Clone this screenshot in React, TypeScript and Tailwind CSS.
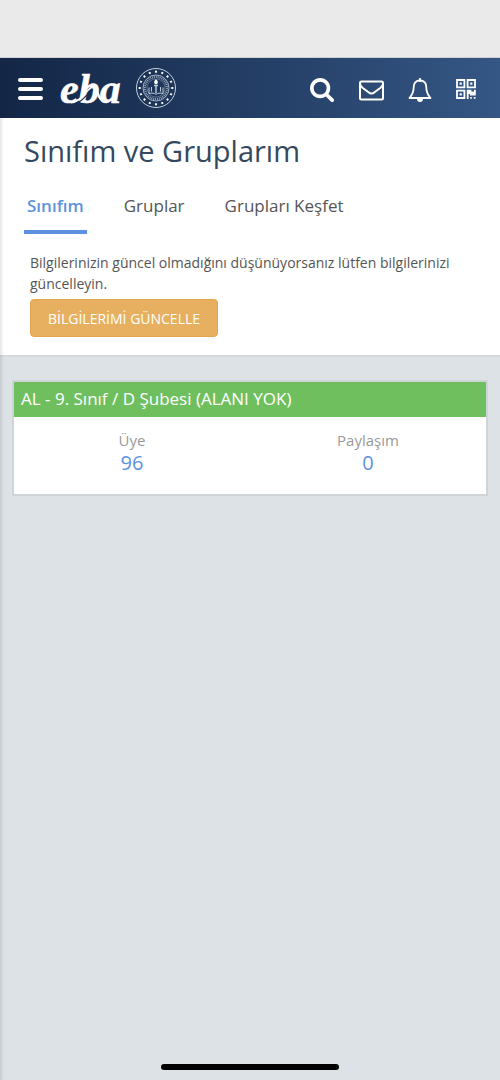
import { useState } from "react";

const TABS = ["Sınıfım", "Gruplar", "Grupları Keşfet"];

const STATS = [
  { label: "Üye", value: 96 },
  { label: "Paylaşım", value: 0 },
];

const DOTS = Array.from({ length: 16 }, (_, i) => i * 22.5);

function EbaLogo() {
  return (
    <svg
      className="overflow-visible"
      width="64"
      height="52"
      viewBox="0 0 64 52"
      role="img"
      aria-label="eba"
    >
      <text
        x="1"
        y="41"
        fill="#fff"
        stroke="#fff"
        strokeWidth="0.5"
        fontSize="42"
        fontWeight="700"
        fontStyle="italic"
        fontFamily="'Liberation Serif', serif"
      >
        eba
      </text>
      {/* swash running from the e up through the b */}
      <path d="M17 41.500C25 39 28 31 34 27.500" fill="none" stroke="#1b3054" strokeWidth="1.200" />
      <path d="M12 40.500C22 40 26 29 33 25" fill="none" stroke="#fff" strokeWidth="1.800" />
      <path d="M36 25C40 29 38 38 46 40" fill="none" stroke="#fff" strokeWidth="2.200" />
    </svg>
  );
}

function Seal() {
  return (
    <svg width="42" height="42" viewBox="0 0 42 42" fill="none" stroke="#c3cedd" aria-hidden>
      <circle cx="21" cy="21" r="19.5" strokeWidth="1" />
      <circle cx="21" cy="21" r="13" strokeWidth="0.8" />
      <circle cx="21" cy="21" r="11" strokeWidth="2.2" strokeDasharray="1 0.9" opacity="0.7" />
      <circle cx="21" cy="21" r="9" strokeWidth="0.5" opacity="0.7" />
      {DOTS.map((deg) => (
        <rect
          key={deg}
          x="20"
          y="3.7"
          width="2"
          height="2"
          fill="#fff"
          stroke="none"
          transform={`rotate(${deg} 21 21)`}
        />
      ))}
      {/* torch over an open book */}
      <path d="M21 12c-2.500 2.500-2.500 4.500 0 5.500 2.500-1 2.500-3 0-5.500z" fill="#fff" stroke="none" />
      <path d="M19 18.500h4M21 18v8" strokeWidth="1.400" />
      <path
        d="M14 20.500v6c3-.8 5.500-.3 7 .8 1.500-1.100 4-1.600 7-.8v-6M16.500 20v4.500M25.500 20v4.500"
        strokeWidth="1"
      />
    </svg>
  );
}

function SearchIcon() {
  return (
    <svg width="24" height="24" viewBox="64 128 1664 1664" fill="#fff" aria-hidden>
      <path d="M1216 832q0-185-131.5-316.5t-316.5-131.5-316.5 131.5-131.5 316.5 131.5 316.5 316.5 131.5 316.5-131.5 131.5-316.5zm512 832q0 52-38 90t-90 38q-54 0-90-38l-343-342q-179 124-399 124-143 0-273.5-55.5t-225-150-150-225-55.5-273.5 55.5-273.5 150-225 225-150 273.5-55.5 273.5 55.5 225 150 150 225 55.5 273.5q0 220-124 399l343 343q37 37 37 90z" />
    </svg>
  );
}

function MailIcon() {
  return (
    <svg width="26" height="26" viewBox="0 0 26 26" fill="none" stroke="#fff" strokeWidth="2" aria-hidden>
      <rect x="2" y="4.500" width="23" height="18" rx="1.5" />
      <path d="M2 6.500c0 1.500 1 3 2.500 4.200l6 4.500q3 2.500 6 0l6-4.500C24 9.500 25 8 25 6.500" />
    </svg>
  );
}

function BellIcon() {
  return (
    <svg width="24" height="26" viewBox="0 0 24 26" fill="none" stroke="#fff" strokeWidth="1.800" aria-hidden>
      <path
        d="M12 3.500c-4.200 0-6.300 3-6.300 6.700 0 5-1.800 8-4.200 10.800h21c-2.400-2.800-4.200-5.800-4.200-10.800 0-3.700-2.100-6.700-6.300-6.700z"
        strokeLinejoin="round"
      />
      <path d="M12 2v2" strokeWidth="2.200" strokeLinecap="round" />
      <path d="M9 21.500a3 3.500 0 0 0 6 0z" fill="#fff" stroke="none" />
    </svg>
  );
}

function QrIcon() {
  return (
    <svg width="20" height="20" viewBox="0 0 20 20" fill="none" stroke="#fff" strokeWidth="1.800" aria-hidden>
      <path d="M1 1h7.400v7.400H1zM11.600 1H19v7.400h-7.400zM1 11.600h7.400V19H1z" />
      <path
        d="M3.600 3.600h2.200v2.200H3.600zM14.200 3.600h2.200v2.200h-2.200zM3.600 14.200h2.200v2.200H3.600zM10.800 10.800h4.600v1.600H18v-1.600h1.800v5.700H14v-1.600h-1.400v5H10.800zM14.200 18h1.600v1.700h-1.600zM17.800 18h1.700v1.700h-1.700z"
        fill="#fff"
        stroke="none"
      />
    </svg>
  );
}

function TopBar() {
  return (
    <header className="flex h-15 items-center bg-linear-to-r from-[#132646] to-[#355785] pr-6 pl-[18px]">
      <button aria-label="Menü" className="flex w-[25px] flex-col gap-[5px] pt-0.5">
        <span className="h-1 rounded-xs bg-white" />
        <span className="h-1 rounded-xs bg-white" />
        <span className="h-1 rounded-xs bg-white" />
      </button>
      <a href="#" className="ml-4">
        <EbaLogo />
      </a>
      <a href="#" aria-label="Millî Eğitim Bakanlığı" className="ml-3">
        <Seal />
      </a>
      <nav className="ml-auto flex items-center gap-6 pt-1">
        <button aria-label="Ara">
          <SearchIcon />
        </button>
        <button aria-label="Mesajlar">
          <MailIcon />
        </button>
        <button aria-label="Bildirimler">
          <BellIcon />
        </button>
        <button aria-label="Karekod" className="pb-0.5">
          <QrIcon />
        </button>
      </nav>
    </header>
  );
}

export default function App() {
  const [tab, setTab] = useState(TABS[0]);

  return (
    <div className="flex min-h-screen flex-col bg-[#dde2e6] font-['Open_Sans',sans-serif] text-[#555]">
      <div className="h-[58px] border-b border-[#d0d0d2] bg-[#eaeaea]" />
      <TopBar />

      <div className="relative flex flex-1 flex-col">
        <section className="bg-white px-6 pb-[18px]">
          <h1 className="pt-3 text-[29px] leading-[42px] text-[#34495e]">Sınıfım ve Gruplarım</h1>
          <div role="tablist" className="mt-[22px] flex gap-[34px]">
            {TABS.map((t) => (
              <button
                key={t}
                role="tab"
                aria-selected={t === tab}
                onClick={() => setTab(t)}
                className={`border-b-4 px-[3px] pb-3 text-[17px] leading-6 ${
                  t === tab ? "border-[#5d92e0] font-semibold text-[#5d92e0]" : "border-transparent"
                }`}
              >
                {t}
              </button>
            ))}
          </div>
          <div className="mt-[18px] px-1.5">
            <p className="text-[14px] leading-[21px]">
              Bilgilerinizin güncel olmadığını düşünüyorsanız lütfen bilgilerinizi güncelleyin.
            </p>
            <button className="mt-[5px] h-[38px] rounded border border-[#e5a54c] bg-[#e7b060] px-[17px] text-[14px] text-white">
              BİLGİLERİMİ GÜNCELLE
            </button>
          </div>
        </section>

        <main className="border-t-2 border-[#d5dadf] px-3 pt-[23px]">
          <article className="border-2 border-[#cfd4d8] bg-white">
            <h2 className="bg-[#70bf5f] px-[7px] pb-px text-[17px] leading-[34px] text-white">
              AL - 9. Sınıf / D Şubesi (ALANI YOK)
            </h2>
            <dl className="grid grid-cols-2 pt-3 pb-[19px] text-center">
              {STATS.map((s) => (
                <div key={s.label}>
                  <dt className="text-[15px] leading-[22px] text-[#999]">{s.label}</dt>
                  <dd className="text-[20px] leading-6 text-[#5d92e0]">{s.value}</dd>
                </div>
              ))}
            </dl>
          </article>
        </main>

        <div className="mx-auto mt-auto mb-[10px] h-1.5 w-[178px] rounded-full bg-black" />
        <div className="pointer-events-none absolute inset-y-0 left-0 w-1 bg-linear-to-r from-black/10 to-transparent" />
      </div>
    </div>
  );
}
